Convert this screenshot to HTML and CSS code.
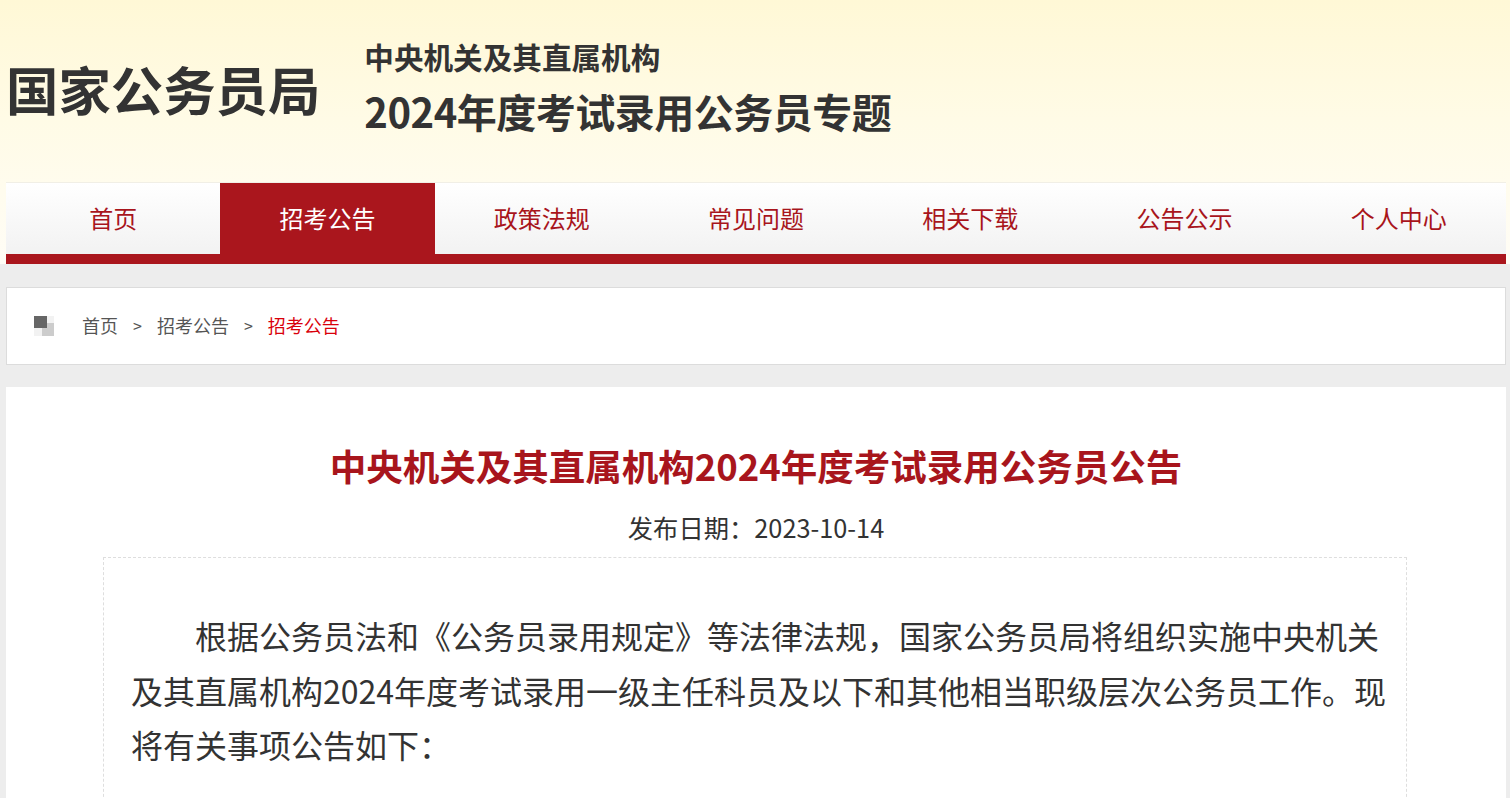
FILE: index.html
```html
<!DOCTYPE html>
<html lang="zh-CN">
<head>
<meta charset="utf-8">
<title>中央机关及其直属机构2024年度考试录用公务员专题</title>
<link rel="stylesheet" href="styles.css">
</head>
<body>
<header class="header">
  <div class="wrap">
    <div class="brand">
      <div class="logo">国家公务员局</div>
      <div class="topic">
        <div class="topic-sub">中央机关及其直属机构</div>
        <div class="topic-main">2024年度考试录用公务员专题</div>
      </div>
    </div>
    <nav class="nav">
      <a class="nav-item" href="#">首页</a>
      <a class="nav-item active" href="#">招考公告</a>
      <a class="nav-item" href="#">政策法规</a>
      <a class="nav-item" href="#">常见问题</a>
      <a class="nav-item" href="#">相关下载</a>
      <a class="nav-item" href="#">公告公示</a>
      <a class="nav-item" href="#">个人中心</a>
    </nav>
  </div>
</header>
<div class="wrap">
  <div class="crumbs">
    <span class="crumb-icon"><i class="sq-dark"></i><i class="sq-light"></i></span>
    <a class="crumb" href="#">首页</a>
    <span class="sep">&gt;</span>
    <a class="crumb" href="#">招考公告</a>
    <span class="sep">&gt;</span>
    <span class="crumb current">招考公告</span>
  </div>
  <main class="article">
    <h1 class="title">中央机关及其直属机构2024年度考试录用公务员公告</h1>
    <div class="date">发布日期：2023-10-14</div>
    <div class="content">
      <p>根据公务员法和《公务员录用规定》等法律法规，国家公务员局将组织实施中央机关及其直属机构2024年度考试录用一级主任科员及以下和其他相当职级层次公务员工作。现将有关事项公告如下：</p>
    </div>
  </main>
</div>
</body>
</html>
```
FILE: styles.css
```css
* { box-sizing: border-box; }
html, body { margin: 0; padding: 0; }
body {
  background: #ededed;
  font-family: "Noto Sans CJK SC", "Noto Sans", sans-serif;
  color: #333;
  overflow: hidden;
}
a { text-decoration: none; }
.wrap {
  width: 1500px;
  margin-left: 6px;
}
.header {
  background: linear-gradient(to bottom, #fff8d6 0%, #fffbe6 45%, #fffdf6 100%);
}
.brand {
  height: 182px;
  display: flex;
  align-items: flex-start;
}
.logo {
  font-size: 52.4px;
  font-weight: 700;
  color: #333;
  line-height: 53px;
  margin-top: 62px;
  white-space: nowrap;
}
.topic {
  margin-left: 44px;
  margin-top: 37px;
  display: flex;
  flex-direction: column;
}
.topic-sub {
  font-size: 29.6px;
  font-weight: 700;
  line-height: 40px;
  white-space: nowrap;
}
.topic-main {
  font-size: 40px;
  font-weight: 700;
  line-height: 56px;
  margin-top: 6px;
  letter-spacing: -0.5px;
  white-space: nowrap;
}
.nav {
  display: grid;
  grid-template-columns: repeat(7, 1fr);
  height: 82px;
  border-top: 1px solid #f1efe6;
  border-bottom: 10px solid #aa161d;
  background: linear-gradient(to bottom, #ffffff 0%, #f2f2f2 100%);
}
.nav-item {
  display: flex;
  align-items: center;
  justify-content: center;
  font-size: 24px;
  color: #a8151c;
  padding-bottom: 3px;
}
.nav-item.active {
  background: #aa161d;
  color: #fff;
}
.crumbs {
  margin-top: 23px;
  height: 78px;
  background: #fff;
  border: 1px solid #dcdcdc;
  display: flex;
  align-items: center;
  padding-left: 27px;
  font-size: 18px;
  color: #555;
}
.crumb-icon {
  position: relative;
  width: 20px;
  height: 20px;
  background: #f2f2f2;
  margin-right: 28px;
}
.crumb-icon i { position: absolute; display: block; }
.sq-dark { left: 0; top: 0; width: 13px; height: 12px; background: #666; z-index: 1; }
.sq-light { right: 0; bottom: 0; width: 12px; height: 13px; background: #ccc; }
.crumb { color: #555; margin-top: -2px; }
.sep { margin: -2px 15px 0; color: #555; font-size: 16px; }
.crumb.current { color: #d9000b; }
.article {
  margin-top: 22px;
  background: #fff;
  padding-top: 54px;
  min-height: 420px;
}
.title {
  margin: 0;
  text-align: center;
  font-size: 36.5px;
  line-height: 50px;
  font-weight: 700;
  color: #a8151c;
}
.date {
  margin-top: 18px;
  text-align: center;
  font-size: 25.3px;
  line-height: 36px;
  color: #333;
}
.content {
  width: 1304px;
  margin: 12px 0 0 97px;
  border: 1px dashed #dedede;
  border-bottom: none;
  padding: 50px 17px 40px 27px;
}
.content p {
  margin: 0;
  font-size: 32px;
  line-height: 54.5px;
  text-indent: 2em;
  color: #333;
}
```
